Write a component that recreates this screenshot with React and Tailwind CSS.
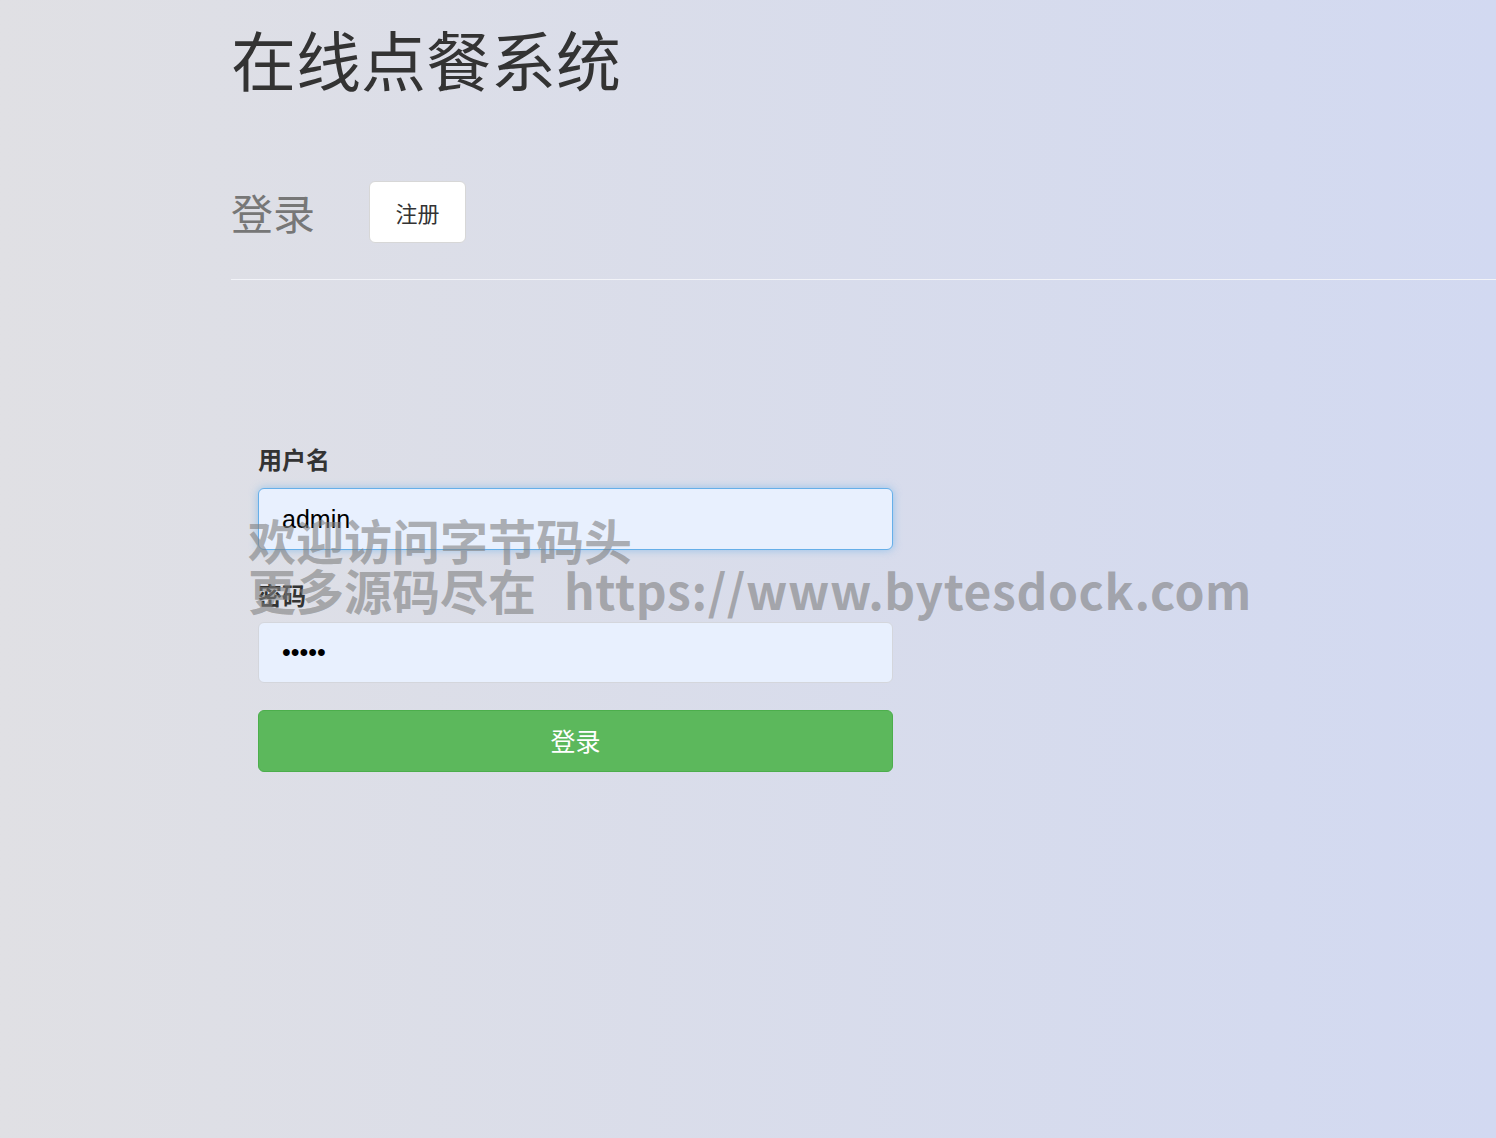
import React from 'react';

const cjk = { fontFamily: '"Noto Sans CJK SC", "Noto Sans", sans-serif' };

export default function App() {
  return (
    <div
      className="relative min-h-[1138px] w-full overflow-hidden bg-gradient-to-r from-[#e0e0e4] to-[#d2d9f1] text-[#333]"
      style={cjk}
    >
      <div className="pl-[231px]">
        {/* Title */}
        <h1 className="pt-[12px] text-[65px] leading-[92px] font-normal text-[#333]">
          在线点餐系统
        </h1>

        {/* Tabs */}
        <div className="mt-[77px] flex items-center border-b border-[#f2f3f8] pb-[36px]">
          <span className="text-[42px] leading-[52px] text-[#777]">登录</span>
          <button className="ml-[54px] h-[62px] w-[97px] rounded-md border border-[#d7d7d7] bg-white text-[22px] text-[#333]">
            注册
          </button>
        </div>

        {/* Form */}
        <div className="mt-[162px] w-[662px] pl-[27px]">
          <label className="block text-[24px] leading-[34px] font-bold text-[#333]">用户名</label>
          <input
            readOnly
            value="admin"
            className="mt-[12px] block h-[62px] w-[635px] rounded-md border border-[#66afe9] bg-[#e8f0fe] px-[23px] text-[25px] text-black shadow-[0_0_8px_rgba(102,175,233,0.6)] outline-none"
            style={{ fontFamily: '"Liberation Sans", Arial, sans-serif' }}
          />

          <label className="mt-[28px] block text-[24px] leading-[34px] font-bold text-[#333]">密码</label>
          <input
            readOnly
            type="password"
            value="12345"
            className="mt-[10px] block h-[61px] w-[635px] rounded-md border border-[#d4d6dc] bg-[#e8f0fe] px-[23px] text-[25px] text-black outline-none"
            style={{ fontFamily: '"Liberation Sans", Arial, sans-serif' }}
          />

          <button className="mt-[27px] block h-[62px] w-[635px] rounded-md border border-[#4cae4c] bg-[#5cb85c] text-[25px] text-white">
            登录
          </button>
        </div>
      </div>

      {/* Watermark overlay */}
      <div className="pointer-events-none absolute left-[248px] top-[514px] text-[48px] leading-[50px] font-bold text-[#808080]/60 whitespace-pre">
        <div>欢迎访问字节码头</div>
        <div>
          更多源码尽在<span className="ml-[28px] tracking-[0.6px]">https://www.bytesdock.com</span>
        </div>
      </div>
    </div>
  );
}
